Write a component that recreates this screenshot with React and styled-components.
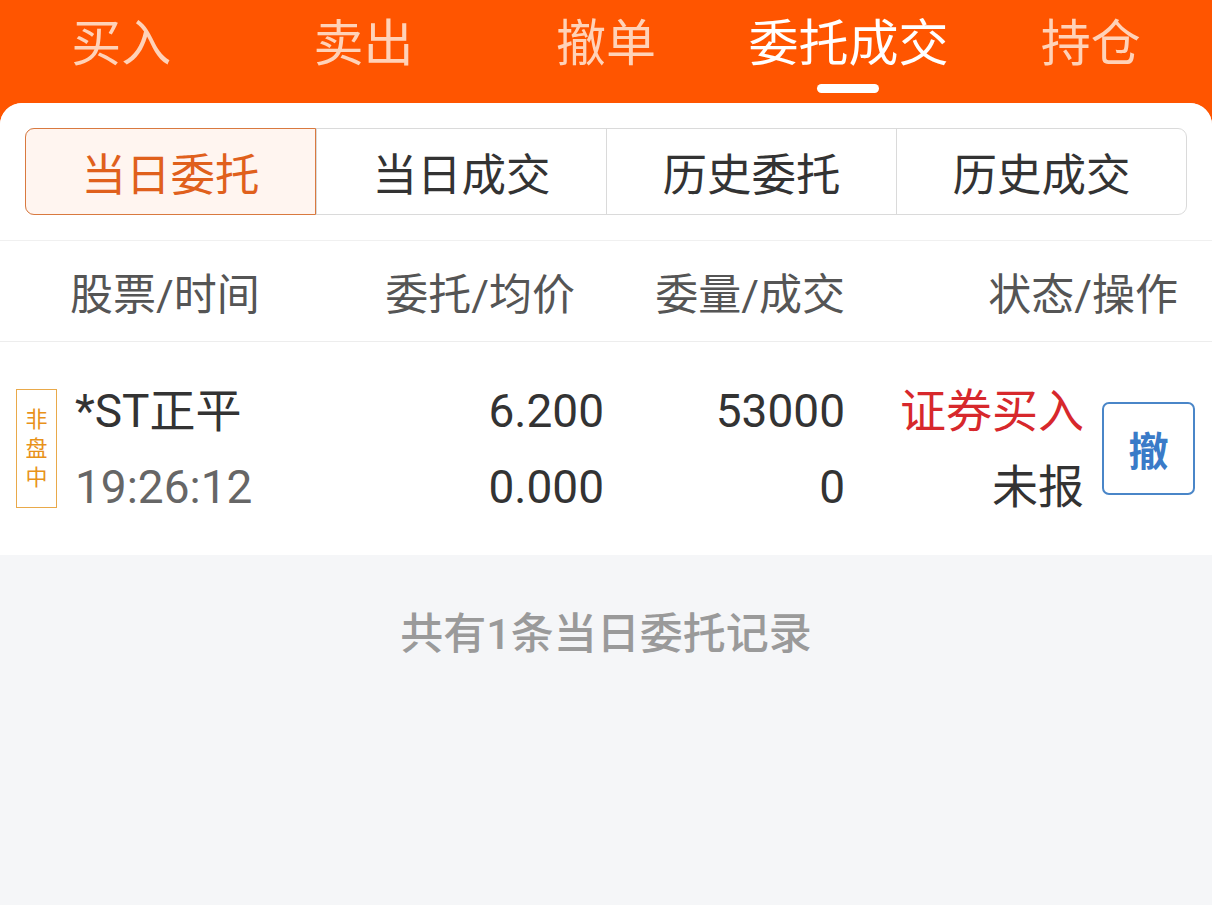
import React from "react";
import styled, { createGlobalStyle } from "styled-components";

const Global = createGlobalStyle`
  html, body { margin: 0; padding: 0; background: #FF5500; }
  body { font-family: Roboto, "Noto Sans CJK SC", "Noto Sans", sans-serif; }
  * { box-sizing: border-box; }
`;

const Page = styled.div`
  width: 1212px;
  height: 905px;
  background: #FF5500;
  display: flex;
  flex-direction: column;
  overflow: hidden;
`;

const TopNav = styled.nav`
  height: 103px;
  display: grid;
  grid-template-columns: repeat(5, 1fr);
`;

const NavTab = styled.div`
  position: relative;
  display: flex;
  justify-content: center;
  padding-top: 13px;
  font-size: 50px;
  line-height: 62px;
  color: ${(p) => (p.$active ? "#FFFFFF" : "#FFD2B8")};
`;

const Indicator = styled.span`
  position: absolute;
  top: 84px;
  left: 50%;
  width: 62px;
  height: 9px;
  margin-left: -31px;
  border-radius: 5px;
  background: #FFFFFF;
`;

const Card = styled.main`
  flex: 1;
  background: #F5F6F8;
  border-radius: 22px 22px 0 0;
  overflow: hidden;
  display: flex;
  flex-direction: column;
`;

const SegmentWrap = styled.div`
  background: #fff;
  padding: 25px;
`;

const Segments = styled.div`
  display: grid;
  grid-template-columns: repeat(4, 1fr);
  height: 87px;
  border: 1px solid #DADADA;
  border-radius: 9px;
`;

const Segment = styled.div`
  display: flex;
  align-items: center;
  justify-content: center;
  font-size: 44.5px;
  color: ${(p) => (p.$active ? "#E0601C" : "#333333")};
  background: ${(p) => (p.$active ? "#FFF5F0" : "transparent")};
  border-left: ${(p) => (p.$first ? "none" : "1px solid #DADADA")};
  ${(p) =>
    p.$active &&
    `margin: -1px 0 -1px -1px; border: 1px solid #D9793F; border-radius: 9px 0 0 9px;`}
`;

const HeaderRow = styled.div`
  background: #fff;
  height: 102px;
  display: grid;
  grid-template-columns: 1fr 270px 270px 333px;
  align-items: center;
  padding: 0 34px 0 70px;
  border-top: 1px solid #F0F0F0;
  border-bottom: 1px solid #EDEDED;
  font-size: 43px;
  color: #555555;
`;

const HeadCell = styled.div`
  text-align: ${(p) => (p.$right ? "right" : "left")};
`;

const DataRow = styled.div`
  background: #fff;
  height: 213px;
  display: flex;
  align-items: center;
  padding: 0 17px 0 16px;
`;

const Badge = styled.div`
  width: 41px;
  height: 119px;
  border: 1.5px solid #E9A94A;
  display: flex;
  flex-direction: column;
  align-items: center;
  justify-content: center;
  font-size: 22px;
  line-height: 29px;
  color: #E8921A;
`;

const Cell = styled.div`
  display: flex;
  flex-direction: column;
  align-items: ${(p) => (p.$right ? "flex-end" : "flex-start")};
  width: ${(p) => p.$w || "auto"};
  flex: ${(p) => (p.$grow ? 1 : "none")};
  margin-left: ${(p) => p.$ml || "0"};
  font-size: 46px;
  line-height: 76px;
`;

const Line = styled.span`
  color: ${(p) => p.$color || "#333333"};
  white-space: nowrap;
`;

const CancelBtn = styled.button`
  margin-left: 18px;
  width: 93px;
  height: 93px;
  border: 2px solid #4A86C8;
  border-radius: 7px;
  background: #fff;
  color: #3A7BC8;
  font-family: inherit;
  font-size: 40px;
  font-weight: 700;
  padding: 0;
  display: flex;
  align-items: center;
  justify-content: center;
`;

const Footer = styled.div`
  padding-top: 56px;
  text-align: center;
  font-size: 43px;
  line-height: 46px;
  font-weight: 500;
  color: #9A9A9A;
`;

export default function App() {
  const tabs = ["买入", "卖出", "撤单", "委托成交", "持仓"];
  const segs = ["当日委托", "当日成交", "历史委托", "历史成交"];
  return (
    <Page>
      <Global />
      <TopNav>
        {tabs.map((t, i) => (
          <NavTab key={t} $active={i === 3}>
            {t}
            {i === 3 && <Indicator />}
          </NavTab>
        ))}
      </TopNav>
      <Card>
        <SegmentWrap>
          <Segments>
            {segs.map((s, i) => (
              <Segment key={s} $active={i === 0} $first={i === 0}>
                {s}
              </Segment>
            ))}
          </Segments>
        </SegmentWrap>
        <HeaderRow>
          <HeadCell>股票/时间</HeadCell>
          <HeadCell $right>委托/均价</HeadCell>
          <HeadCell $right>委量/成交</HeadCell>
          <HeadCell $right>状态/操作</HeadCell>
        </HeaderRow>
        <DataRow>
          <Badge>
            <span>非</span>
            <span>盘</span>
            <span>中</span>
          </Badge>
          <Cell $grow $ml="18px">
            <Line>*ST正平</Line>
            <Line $color="#666666">19:26:12</Line>
          </Cell>
          <Cell $right $w="200px">
            <Line>6.200</Line>
            <Line>0.000</Line>
          </Cell>
          <Cell $right $w="241px">
            <Line>53000</Line>
            <Line>0</Line>
          </Cell>
          <Cell $right $w="239px">
            <Line $color="#D7282C">证券买入</Line>
            <Line>未报</Line>
          </Cell>
          <CancelBtn>撤</CancelBtn>
        </DataRow>
        <Footer>共有1条当日委托记录</Footer>
      </Card>
    </Page>
  );
}
